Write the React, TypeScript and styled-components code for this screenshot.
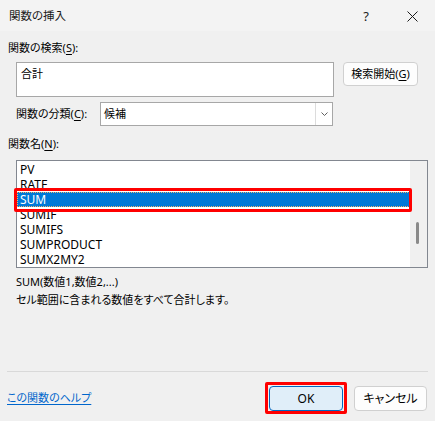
import React from 'react';
import styled, { createGlobalStyle } from 'styled-components';

const GlobalStyle = createGlobalStyle`
  html, body {
    margin: 0;
    padding: 0;
    background: #f0f0f0;
  }
  body {
    font-family: "Noto Sans", "Noto Sans CJK JP", sans-serif;
    font-size: 11px;
    font-feature-settings: "palt";
    color: #000;
  }
`;

const functionNames = ['PV', 'RATE', 'SUM', 'SUMIF', 'SUMIFS', 'SUMPRODUCT', 'SUMX2MY2'];

const App: React.FC = () => {
  const selected = 'SUM';

  return (
    <>
      <GlobalStyle />
      <Window>
        <TitleBar>
          <Title>関数の挿入</Title>
          <TitleButtons>
            <HelpGlyph>?</HelpGlyph>
            <CloseButton>
              <svg width="11" height="11" viewBox="0 0 11 11">
                <path d="M0.5 0.5 L10.5 10.5 M10.5 0.5 L0.5 10.5" stroke="#1a1a1a" strokeWidth="1" fill="none" />
              </svg>
            </CloseButton>
          </TitleButtons>
        </TitleBar>

        <Body>
          <Label>関数の検索(<u>S</u>):</Label>
          <SearchRow>
            <SearchBox>合計</SearchBox>
            <Button>検索開始(<u>G</u>)</Button>
          </SearchRow>

          <CategoryRow>
            <CategoryLabel>関数の分類(<u>C</u>):</CategoryLabel>
            <Select>
              <SelectValue>候補</SelectValue>
              <DropButton>
                <svg width="7" height="4" viewBox="0 0 7 4">
                  <path d="M0.5 0.5 L3.5 3.5 L6.5 0.5" stroke="#606060" strokeWidth="1" fill="none" />
                </svg>
              </DropButton>
            </Select>
          </CategoryRow>

          <ListLabel>関数名(<u>N</u>):</ListLabel>
          <ListBox>
            <Items>
              {functionNames.map((name) => (
                <Item key={name} $selected={name === selected}>
                  {name}
                </Item>
              ))}
            </Items>
            <ScrollTrack>
              <Thumb />
            </ScrollTrack>
            <RowCallout />
          </ListBox>

          <Syntax>SUM(数値1,数値2,...)</Syntax>
          <Description>セル範囲に含まれる数値をすべて合計します。</Description>
        </Body>

        <Footer>
          <Separator />
          <FooterRow>
            <HelpLink>この関数のヘルプ</HelpLink>
            <Buttons>
              <OkWrap>
                <Button $primary $width={74}>OK</Button>
                <ButtonCallout />
              </OkWrap>
              <Button $width={73}>キャンセル</Button>
            </Buttons>
          </FooterRow>
        </Footer>
      </Window>
    </>
  );
};

const Window = styled.div`
  width: 435px;
  height: 421px;
  display: flex;
  flex-direction: column;
  background: #f0f0f0;
  overflow: hidden;
`;

const TitleBar = styled.div`
  height: 31px;
  flex-shrink: 0;
  display: flex;
  align-items: center;
  justify-content: space-between;
  padding-left: 9px;
  background: #f3f3f3;
`;

const Title = styled.div`
  font-size: 11.5px;
  line-height: 16px;
  color: #1a1a1a;
`;

const TitleButtons = styled.div`
  display: flex;
  align-items: center;
  height: 100%;
`;

const HelpGlyph = styled.div`
  width: 46px;
  text-align: center;
  font-size: 13px;
  color: #1a1a1a;
  font-family: "Noto Sans", sans-serif;
`;

const CloseButton = styled.div`
  width: 46px;
  display: flex;
  align-items: center;
  justify-content: center;
  padding-top: 1px;
`;

const Body = styled.div`
  flex: 1;
  display: flex;
  flex-direction: column;
  padding: 0 7px 0 8px;
`;

const Label = styled.div`
  margin-top: 9px;
  line-height: 16px;
  u {
    text-decoration-thickness: 1px;
    text-underline-offset: 2px;
  }
`;

const SearchRow = styled.div`
  display: flex;
  align-items: flex-start;
  gap: 9px;
  margin-top: 6px;
  padding-left: 8px;
`;

const SearchBox = styled.div`
  box-sizing: border-box;
  width: 318px;
  height: 35px;
  padding: 3px 4px;
  line-height: 16px;
  background: #fff;
  border: 1px solid #a7a7a7;
`;

const Button = styled.div<{ $primary?: boolean; $width?: number }>`
  box-sizing: border-box;
  width: ${(p) => p.$width ?? 75}px;
  height: ${(p) => (p.$width ? 25 : 24)}px;
  display: flex;
  align-items: center;
  justify-content: center;
  border-radius: 4px;
  font-size: ${(p) => (p.$width ? 12 : 11)}px;
  background: ${(p) => (p.$primary ? '#e0eef9' : '#fdfdfd')};
  border: 1px solid ${(p) => (p.$primary ? '#0067c0' : '#d0d0d0')};
  line-height: 16px;
  u {
    text-decoration-thickness: 1px;
    text-underline-offset: 2px;
  }
`;

const CategoryRow = styled.div`
  display: flex;
  align-items: center;
  margin-top: 5px;
  padding-left: 8px;
`;

const CategoryLabel = styled(Label)`
  margin-top: 0;
  width: 84px;
`;

const Select = styled.div`
  box-sizing: border-box;
  width: 233px;
  height: 24px;
  display: flex;
  background: #fff;
  border: 1px solid #a7a7a7;
`;

const SelectValue = styled.div`
  flex: 1;
  padding-left: 3px;
  line-height: 22px;
`;

const DropButton = styled.div`
  width: 16px;
  display: flex;
  align-items: center;
  justify-content: center;
  border-left: 1px solid #dcdcdc;
`;

const ListLabel = styled(Label)`
  margin-top: 10px;
`;

const ListBox = styled.div`
  position: relative;
  box-sizing: border-box;
  margin: 8px 0 0 8px;
  width: 412px;
  height: 108px;
  display: flex;
  background: #fff;
  border: 1px solid #828790;
`;

const Items = styled.div`
  flex: 1;
  padding-top: 1px;
  overflow: hidden;
`;

const Item = styled.div<{ $selected?: boolean }>`
  height: 15px;
  line-height: 15px;
  padding-left: 3px;
  font-size: 12px;
  background: ${(p) => (p.$selected ? '#0078d7' : 'transparent')};
  color: ${(p) => (p.$selected ? '#fff' : '#000')};
  outline: ${(p) => (p.$selected ? '1px dotted #f2b36b' : 'none')};
  outline-offset: -1px;
`;

const ScrollTrack = styled.div`
  width: 17px;
  background: #f0f0f0;
  position: relative;
`;

const Thumb = styled.div`
  position: absolute;
  left: 6px;
  top: 61px;
  width: 3px;
  height: 22px;
  border-radius: 2px;
  background: #8a8a8a;
`;

const RowCallout = styled.div`
  position: absolute;
  left: -3px;
  top: 27px;
  width: 398px;
  height: 24px;
  box-sizing: border-box;
  border: 3px solid #ff0000;
  border-radius: 2px;
  pointer-events: none;
`;

const Syntax = styled.div`
  margin: 5px 0 0 8px;
  line-height: 18px;
`;

const Description = styled.div`
  margin-left: 8px;
  line-height: 18px;
`;

const Footer = styled.div`
  padding: 0 7px 10px 7px;
`;

const Separator = styled.div`
  height: 1px;
  background: #d9d9d9;
`;

const FooterRow = styled.div`
  margin-top: 14px;
  display: flex;
  align-items: center;
  justify-content: space-between;
`;

const HelpLink = styled.a`
  color: #0066cc;
  text-decoration: underline;
  text-underline-offset: 2px;
  line-height: 16px;
  margin-top: -2px;
  cursor: pointer;
`;

const Buttons = styled.div`
  display: flex;
  gap: 11px;
  margin-right: 1px;
`;

const OkWrap = styled.div`
  position: relative;
`;

const ButtonCallout = styled.div`
  position: absolute;
  left: -4px;
  top: -4px;
  right: -4px;
  bottom: -3px;
  box-sizing: border-box;
  border: 3px solid #ff0000;
  border-radius: 2px;
  pointer-events: none;
`;

export default App;
